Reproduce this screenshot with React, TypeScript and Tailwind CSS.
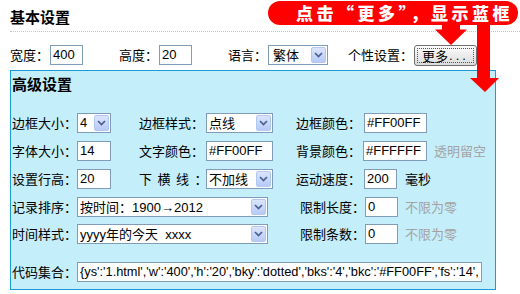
import React from "react";

const font = "font-['Liberation_Sans','Noto_Sans_CJK_SC',sans-serif]";
const cjk = "font-['Noto_Sans_CJK_SC','Liberation_Sans',sans-serif]";

function Chevron() {
  return (
    <svg width="9" height="6" viewBox="0 0 9 6">
      <path d="M1 1 L4.5 4.5 L8 1" fill="none" stroke="#4b5f8e" strokeWidth="1.7" />
    </svg>
  );
}

function Select({ w, children }: { w: string; children: React.ReactNode }) {
  return (
    <div className={`flex items-center ${w} h-[20px] border border-[#7f9db9] bg-white p-[1px]`}>
      <div className="flex-1 pl-[1px] text-[13px] leading-[18px] whitespace-pre overflow-hidden">{children}</div>
      <div className="w-[15px] h-[16px] rounded-[2px] border border-[#b3c7f3] bg-gradient-to-b from-[#dbe5fd] to-[#b7caf6] flex items-center justify-center">
        <Chevron />
      </div>
    </div>
  );
}

function Input({ w, children, className = "text-[13px]" }: { w: string; children: React.ReactNode; className?: string }) {
  return (
    <div className={`${w} h-[20px] border border-[#7f9db9] bg-white pl-[2px] leading-[18px] whitespace-pre overflow-hidden ${className}`}>
      {children}
    </div>
  );
}

function Label({ w, children, className = "" }: { w: string; children: React.ReactNode; className?: string }) {
  return <div className={`${w} ${cjk} text-[13px] leading-[20px] whitespace-nowrap ${className}`}>{children}</div>;
}

export default function App() {
  return (
    <div className={`relative w-[520px] h-[294px] overflow-hidden bg-white text-black ${font}`}>
      <div className="pl-[10px] pt-[7px]">
        <div className={`h-[25px] ${cjk} text-[15px] font-bold leading-[20px] border-b border-dotted border-[#c4c4c4]`}>基本设置</div>

        <div className="mt-[13px] h-[20px] flex items-center">
          <Label w="w-[40px]">宽度：</Label>
          <Input w="w-[33px]">400</Input>
          <Label w="w-[40px]" className="ml-[36px]">高度：</Label>
          <Input w="w-[33px]">20</Input>
          <Label w="w-[40px]" className="ml-[36px]">语言：</Label>
          <Select w="w-[60px]"><span className={`${cjk} pl-[2px]`}>繁体</span></Select>
          <Label w="w-[66px]" className="ml-[20px]">个性设置：</Label>
          <div className="w-[63px] h-[21px] border border-[#6e6e6e] rounded-[3px] bg-gradient-to-b from-[#fcfcfc] to-[#dcdcdc] p-[2px]">
            <div className="h-full border border-dotted border-[#555] flex items-center justify-center text-[13px] leading-[15px]">
              <span className={cjk}>更多</span>
              <span className="tracking-[3px] pl-[1px]">...</span>
            </div>
          </div>
        </div>

        <div className="mt-[5px] w-[486px] h-[220px] border border-[#1a9bd7] bg-[#c5eefb]">
          <div className={`pl-[1px] pt-[3px] h-[23px] ${cjk} text-[15px] font-bold leading-[20px]`}>高级设置</div>

          <div className="mt-[19px] flex items-center h-[20px]">
            <Label w="w-[66px]" className="pl-[1px]">边框大小：</Label>
            <Select w="w-[34px]">4</Select>
            <Label w="w-[67px]" className="ml-[28px]">边框样式：</Label>
            <Select w="w-[67px]"><span className={cjk}>点线</span></Select>
            <Label w="w-[68px]" className="ml-[23px]">边框颜色：</Label>
            <Input w="w-[63px]">#FF00FF</Input>
          </div>

          <div className="mt-[8px] flex items-center h-[20px]">
            <Label w="w-[66px]" className="pl-[1px]">字体大小：</Label>
            <Input w="w-[34px]">14</Input>
            <Label w="w-[67px]" className="ml-[28px]">文字颜色：</Label>
            <Input w="w-[67px]">#FF00FF</Input>
            <Label w="w-[67px]" className="ml-[23px]">背景颜色：</Label>
            <Input w="w-[64px]">#FFFFFF</Input>
            <Label w="w-auto" className="ml-[7px] text-[#a3a3a3]">透明留空</Label>
          </div>

          <div className="mt-[8px] flex items-center h-[20px]">
            <Label w="w-[66px]" className="pl-[1px]">设置行高：</Label>
            <Input w="w-[34px]">20</Input>
            <Label w="w-[67px]" className="ml-[28px]"><span className="tracking-[5.5px]">下横线</span>：</Label>
            <Select w="w-[67px]"><span className={cjk}>不加线</span></Select>
            <Label w="w-[68px]" className="ml-[23px]">运动速度：</Label>
            <Input w="w-[33px]">200</Input>
            <Label w="w-auto" className="ml-[8px]">毫秒</Label>
          </div>

          <div className="mt-[8px] flex items-center h-[20px]">
            <Label w="w-[66px]" className="pl-[1px]">记录排序：</Label>
            <Select w="w-[191px]"><span className={cjk}>按时间：</span>1900→2012</Select>
            <Label w="w-[65px]" className="ml-[32px]">限制长度：</Label>
            <Input w="w-[33px]">0</Input>
            <Label w="w-auto" className="ml-[7px] text-[#a3a3a3]">不限为零</Label>
          </div>

          <div className="mt-[7px] flex items-center h-[20px]">
            <Label w="w-[66px]" className="pl-[1px]">时间样式：</Label>
            <Select w="w-[191px]">yyyy<span className={cjk}>年的今天</span>  xxxx</Select>
            <Label w="w-[65px]" className="ml-[32px]">限制条数：</Label>
            <Input w="w-[33px]">0</Input>
            <Label w="w-auto" className="ml-[7px] text-[#a3a3a3]">不限为零</Label>
          </div>

          <div className="mt-[18px] flex items-center h-[20px]">
            <Label w="w-[66px]" className="pl-[1px]">代码集合：</Label>
            <Input w="w-[405px]" className="text-[12.8px]">{"{ys':'1.html','w':'400','h':'20','bky':'dotted','bks':'4','bkc':'#FF00FF','fs':'14',"}</Input>
          </div>
        </div>
      </div>

      <svg className="absolute left-0 top-0 pointer-events-none" width="520" height="294" viewBox="0 0 520 294">
        <rect x="268" y="1" width="250" height="24" rx="12" fill="#ff0000" />
        <polygon points="442,20 460,20 460,29.5 467,29.5 451,45 435,29.5 442,29.5" fill="#ff0000" />
        <polygon points="477,20 490,20 490,78 499,78 485,92 470,78 477,78" fill="#ff0000" />
      </svg>
      <div className={`absolute left-[296px] top-[2px] h-[22px] ${cjk} text-white font-black text-[17px] tracking-[3.5px] leading-[22px] whitespace-nowrap`}>
        点击“更多”，显示蓝框
      </div>
    </div>
  );
}
